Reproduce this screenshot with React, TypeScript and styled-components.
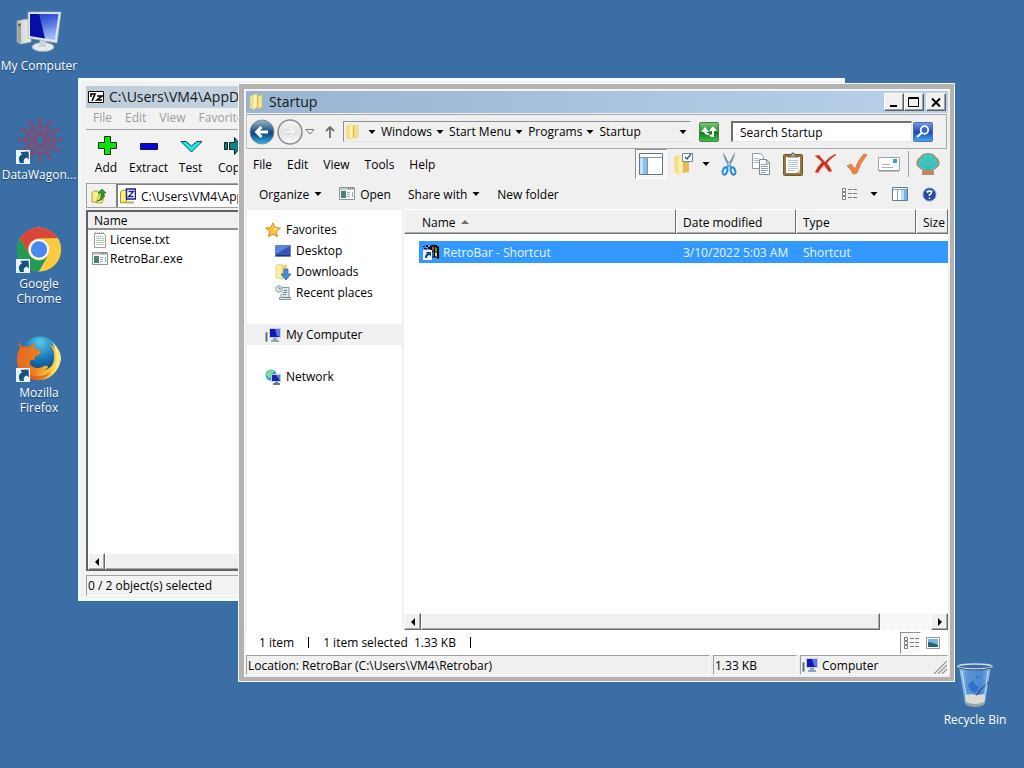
import React from "react";
import styled, { createGlobalStyle, css } from "styled-components";

const GlobalStyle = createGlobalStyle`
  *, *::before, *::after { box-sizing: border-box; }
  html, body, #root { height: 100%; }
  body { margin: 0; overflow: hidden; }
  body, button, input, table {
    font-family: "Open Sans", "Noto Sans", sans-serif;
    font-size: 12px;
    line-height: 15px;
    color: #000;
  }
  button { border: 0; padding: 0; background: none; }
  a { color: inherit; text-decoration: none; }
  svg { display: block; flex: none; }
`;

/* ---------- Desktop ---------- */

const Desktop = styled.main`
  position: relative;
  height: 100%;
  min-height: 100vh;
  background: #3a6ea5;
  overflow: hidden;
`;

const IconColumn = styled.div`
  display: flex;
  flex-direction: column;
  width: 78px;
  padding-top: 9px;
`;

const desktopIcon = css`
  display: flex;
  flex-direction: column;
  align-items: center;
  gap: 3px;
  color: #fff;
  text-align: center;
`;

const DesktopIcon = styled.button`
  ${desktopIcon}
  height: 109px;
`;

const BinIcon = styled.button`
  ${desktopIcon}
  position: absolute;
  right: 16px;
  bottom: 41px;
  width: 66px;
  white-space: nowrap;
`;

const IconLabel = styled.span`
  width: 78px;
  text-shadow: 0 1px 1px rgba(0, 20, 50, 0.5);
`;

/* ---------- Window frames ---------- */

const Window = styled.section<{ $active?: boolean }>`
  position: absolute;
  display: flex;
  flex-direction: column;
  background: #f0f0f0;
  ${(p) =>
    p.$active
      ? css`
          inset: 83px 69px 86px 238px;
          border: 6px solid #b4b1b1;
          border-right-width: 5px;
          border-bottom-width: 5px;
          outline: 1px solid #f4f8fa;
          outline-offset: -1px;
          padding: 2px;
          box-shadow: inset 1px 1px #f8f8f8;
        `
      : css`
          inset: 78px 179px 167px 78px;
          background: #f2f2f2;
          border: 3px solid #f8fbfd;
          border-left-color: #eef8fe;
          padding: 5px 5px 2px;
        `}
`;

const TitleBar = styled.header<{ $active?: boolean }>`
  display: flex;
  align-items: center;
  flex: none;
  height: 22px;
  padding: 0 2px;
  gap: 5px;
  background: ${(p) =>
    p.$active
      ? "linear-gradient(90deg, #99b4d1, #b9d1ea)"
      : "linear-gradient(90deg, #bfcddb, #d7e4f2)"};
`;

const Title = styled.h1`
  flex: 1;
  margin: 0;
  font-size: 14px;
  font-weight: 400;
  line-height: 20px;
  color: #101820;
  white-space: nowrap;
`;

const Caption = styled.button`
  display: grid;
  place-items: center;
  width: 20px;
  height: 18px;
  background: #f0f0f0;
  border: 1px solid;
  border-color: #fff #606060 #606060 #fff;
  box-shadow: inset -1px -1px #a0a0a0;
`;

const CaptionGroup = styled.div`
  display: flex;
  & > :last-child { margin-left: 2px; }
`;

/* ---------- Explorer: address row ---------- */

const AddressRow = styled.div`
  display: flex;
  align-items: center;
  flex: none;
  height: 35px;
  margin: 1px 1px 0 0;
  padding: 0 13px 0 2px;
  border: 1px solid #a8a8a8;
  border-left-color: #c8c8c8;
`;

const NavButton = styled.button`
  display: grid;
  place-items: center;
  flex: none;
`;

const GoButton = styled(NavButton)`
  margin-left: 8px;
`;

const NavGroup = styled.div`
  display: flex;
  align-items: center;
  gap: 2px;
  flex: none;
  width: 94px;
`;

const AddressBox = styled.div`
  display: flex;
  align-items: center;
  flex: 1;
  min-width: 0;
  height: 21px;
  border: 1px solid;
  border-color: #909090 #f4f4f4 #e4e4e4 #909090;
  padding-right: 3px;
`;

const Crumbs = styled.div`
  display: flex;
  align-items: center;
  flex: 1;
  padding-left: 7px;
`;

const Crumb = styled.button`
  padding: 0 3px 0 5px;
  white-space: nowrap;
`;

const CrumbArrow = styled.button`
  display: grid;
  place-items: center;
  width: 9px;
  height: 15px;
`;

const Spacer = styled.span`
  flex: 1;
`;

const SearchBox = styled.input`
  flex: none;
  width: 181px;
  height: 21px;
  margin: 0 1px 0 12px;
  padding: 0 7px;
  border: 1px solid;
  border-color: #707070 #e8e8e8 #e8e8e8 #707070;
  border-width: 2px 1px 1px 2px;
  border-radius: 0;
  background: #fff;
  outline: 0;
  &::placeholder { color: #000; opacity: 1; }
`;

/* ---------- Explorer: menu and commands ---------- */

const BarRow = styled.div`
  display: flex;
  align-items: center;
  justify-content: space-between;
  flex: none;
  height: 30px;
`;

const MenuGroup = styled.nav`
  display: flex;
  gap: 15px;
  padding-left: 7px;
`;

const ToolGroup = styled.div`
  display: flex;
  align-items: center;
  padding-right: 4px;
`;

const Tool = styled.button<{ $width?: number; $height?: number; $pressed?: boolean }>`
  display: grid;
  place-items: center;
  width: ${(p) => p.$width ?? 32}px;
  height: ${(p) => p.$height ?? 30}px;
  ${(p) =>
    p.$pressed &&
    css`
      background: #f8f8f8;
      border: 1px solid;
      border-color: #909090 #fff #fff #909090;
    `}
`;

const Divider = styled.span`
  width: 1px;
  height: 26px;
  margin: 0 3px;
  background: #a0a0a0;
`;

const CommandGroup = styled.div`
  display: flex;
  align-items: center;
  gap: 17px;
  padding-left: 13px;
`;

const Command = styled.button`
  display: flex;
  align-items: center;
  gap: 5px;
  white-space: nowrap;
`;

/* ---------- Explorer: body ---------- */

const Body = styled.div`
  display: flex;
  flex: 1;
  min-height: 0;
`;

const Sidebar = styled.nav`
  display: flex;
  flex-direction: column;
  gap: 21px;
  flex: none;
  width: 158px;
  padding-top: 9px;
  background: #fff;
  border-top: 1px solid #f0f0f0;
  border-left: 1px solid #f0f0f0;
  border-right: 2px solid #f0f0f0;
`;

const Places = styled.ul`
  margin: 0;
  padding: 0;
  list-style: none;
`;

const Place = styled.a<{ $nested?: boolean; $current?: boolean }>`
  display: flex;
  align-items: center;
  gap: 5px;
  height: 21px;
  padding-left: ${(p) => (p.$nested ? 28 : 18)}px;
  background: ${(p) => (p.$current ? "#f0f0f0" : "transparent")};
`;

const ListPane = styled.div`
  display: flex;
  flex-direction: column;
  flex: 1;
  min-width: 0;
  background: #fff;
`;

const ListScroll = styled.div`
  flex: 1;
  min-height: 0;
  overflow: hidden;
`;

const FileTable = styled.table`
  width: 100%;
  table-layout: fixed;
  border-collapse: separate;
  border-spacing: 0;
  text-align: left;
  white-space: nowrap;
  tbody::before {
    content: "";
    display: block;
    height: 7px;
  }
`;

const Column = styled.th<{ $width?: number; $first?: boolean }>`
  width: ${(p) => (p.$width ? `${p.$width}px` : "auto")};
  height: 25px;
  padding: 2px 0 0 ${(p) => (p.$first ? 17 : 6)}px;
  font-weight: 400;
  background: #f0f0f0;
  border: 1px solid;
  border-color: #fff #707070 #707070 #fcfcfc;
  box-shadow: inset 0 -1px #b0b0b0;
  overflow: hidden;
`;

const SortMark = styled.span`
  display: inline-block;
  margin: 0 0 3px 2px;
  border: 4px solid transparent;
  border-top: 0;
  border-bottom-color: #707070;
`;

const Cell = styled.td<{ $first?: boolean }>`
  height: 22px;
  padding: 0 0 0 ${(p) => (p.$first ? 4 : 7)}px;
  background: #3399ff;
  color: #e8f6ff;
  border-left: ${(p) => (p.$first ? "15px solid #fff" : "0")};
  overflow: hidden;
`;

const FileLink = styled.a`
  display: flex;
  align-items: center;
  gap: 4px;
`;

const ScrollBar = styled.div`
  display: flex;
  flex: none;
  height: 17px;
  background: repeating-conic-gradient(#f0f0f0 0 25%, #fff 0 50%) 0 0 / 2px 2px;
`;

const raised = css`
  background: #f0f0f0;
  border: 1px solid;
  border-color: #fff #696969 #696969 #fff;
  box-shadow: inset -1px -1px #a8a8a8;
`;

const ScrollButton = styled.button`
  ${raised}
  display: grid;
  place-items: center;
  flex: none;
  width: 17px;
`;

const Thumb = styled.div`
  ${raised}
  flex: 9;
`;

const Track = styled.div`
  flex: 1;
`;

const DetailsRow = styled.div`
  display: flex;
  align-items: center;
  flex: none;
  height: 25px;
  padding: 0 3px 0 13px;
  background: #fff;
  white-space: nowrap;
`;

const Tick = styled.span`
  width: 1px;
  height: 11px;
  margin: 0 14px;
  background: #000;
`;

const StatusRow = styled.footer`
  display: flex;
  flex: none;
  gap: 3px;
  height: 20px;
  white-space: nowrap;
`;

const StatusCell = styled.div<{ $width?: number }>`
  display: flex;
  align-items: center;
  gap: 4px;
  flex: ${(p) => (p.$width ? `0 0 ${p.$width}px` : "1")};
  padding-left: 1px;
  border: 1px solid;
  border-color: #a0a0a0 #fff #fff #a0a0a0;
  overflow: hidden;
`;

const Grip = styled.span`
  align-self: flex-end;
  margin-left: auto;
`;

/* ---------- 7-Zip window ---------- */

const ZipMenu = styled.nav`
  display: flex;
  gap: 13px;
  flex: none;
  height: 22px;
  padding: 2px 7px 4px;
  color: #9c9c9c;
  border-bottom: 1px solid #a0a0a0;
  button { color: inherit; }
`;

const ZipTools = styled.div`
  display: flex;
  flex: none;
  height: 53px;
  padding-top: 6px;
`;

const ZipTool = styled.button<{ $width: number }>`
  display: flex;
  flex-direction: column;
  align-items: center;
  gap: 3px;
  width: ${(p) => p.$width}px;
  height: 39px;
`;

const ZipPath = styled.div`
  display: flex;
  align-items: center;
  flex: none;
  height: 25px;
  border-top: 1px solid #a0a0a0;
  border-left: 1px solid #a0a0a0;
  border-bottom: 1px solid #a0a0a0;
`;

const ZipUp = styled.button`
  display: grid;
  place-items: center;
  flex: none;
  width: 24px;
`;

const ZipPathBox = styled.label`
  display: flex;
  align-items: center;
  gap: 5px;
  flex: 1;
  height: 23px;
  margin-left: 5px;
  padding-left: 2px;
  background: #fff;
  border-left: 2px solid #808080;
  border-top: 1px solid #808080;
  input {
    flex: 1;
    height: 17px;
    padding: 0;
    border: 0;
    outline: 0;
  }
`;

const ZipList = styled.div`
  display: flex;
  flex-direction: column;
  flex: 1;
  min-height: 0;
  margin: 2px 0 4px;
  background: #fff;
  border: 1px solid;
  border-color: #606060 #fff #606060 #606060;
  border-width: 2px 1px 1px 2px;
`;

const ZipTable = styled.table`
  width: 100%;
  border-spacing: 0;
  text-align: left;
  th {
    height: 18px;
    padding: 0 6px;
    font-weight: 400;
    background: #f0f0f0;
    border-bottom: 2px solid #909090;
  }
  td {
    height: 19px;
    padding: 0 4px;
  }
  a { gap: 2px; }
`;

const ZipFill = styled.div`
  flex: 1;
`;

const ZipStatus = styled.footer`
  flex: none;
  height: 21px;
  padding: 2px 1px;
  border: 1px solid;
  border-color: #a0a0a0 #fff #fff #a0a0a0;
`;

/* ---------- Icons ---------- */

const Triangle = ({ dir = "down" }: { dir?: "down" | "left" | "right" }) => (
  <svg width="8" height="8" viewBox="0 0 8 8" aria-hidden="true">
    <path
      d={dir === "down" ? "M.5 2h7L4 6z" : dir === "left" ? "M6 0v8L2 4z" : "M2 0v8l4-4z"}
    />
  </svg>
);

const ShortcutBadge = () => (
  <g>
    <path d="M0 32h14v14H0z" fill="#e6f2fc" />
    <path
      d="M4 45c-2-5-1-7 2-8.500L4.500 34l8-.5.5 8-2-2C8 40.500 7 42 8 45z"
      fill="#17527f"
    />
  </g>
);

const ComputerLarge = () => (
  <svg width="48" height="46" viewBox="0 0 48 46" aria-hidden="true">
    <defs>
      <linearGradient id="pcScreen" x1="0" y1="0" x2=".3" y2="1">
        <stop offset="0" stopColor="#2038c8" />
        <stop offset=".5" stopColor="#5070e0" />
        <stop offset="1" stopColor="#a0b8f8" />
      </linearGradient>
      <linearGradient id="pcCase" x1="0" y1="0" x2="1" y2="0">
        <stop offset="0" stopColor="#c8ccc8" />
        <stop offset="1" stopColor="#f2f2ec" />
      </linearGradient>
    </defs>
    <path d="M2 12l9-2 5 2v21L6 35l-4-2z" fill="url(#pcCase)" stroke="#a8aca8" strokeWidth=".7" />
    <path d="M2.500 13l3.500 1v20l-3.500-1z" fill="#9ca29c" />
    <circle cx="4.500" cy="16" r="1" fill="#333" />
    <ellipse cx="28" cy="38" rx="11" ry="4.500" fill="#e4e8e8" stroke="#9ca6ac" strokeWidth=".7" />
    <path d="M25 30l6 1v7h-7z" fill="#ccd4d8" />
    <path d="M13 3l33 0-4 31-29-5z" fill="#dfe8ee" stroke="#a4b4c0" strokeWidth=".7" />
    <path d="M15 5l28.500 0L40 31l-25-4z" fill="url(#pcScreen)" />
    <path d="M15 5h9l6 24.500-15-2.500z" fill="#0610a4" />
  </svg>
);

const WagonLarge = () => (
  <svg width="46" height="46" viewBox="0 0 46 46" aria-hidden="true">
    <g fill="none" stroke="#8d4869">
      <circle cx="24" cy="22" r="5" strokeWidth="2.200" />
      <circle cx="24" cy="22" r="9" strokeWidth="2" strokeDasharray="4 2" />
      <circle cx="24" cy="22" r="14" strokeWidth="1.500" strokeDasharray="5 2" />
      {Array.from({ length: 12 }, (_, i) => (
        <g key={i} transform={`rotate(${i * 30} 24 22)`} strokeWidth="1.300">
          <path d="M24 16V5M21 10l3-3 3 3" />
          <circle cx="24" cy="2.500" r="1.800" />
        </g>
      ))}
    </g>
    <ShortcutBadge />
  </svg>
);

const ChromeLarge = () => (
  <svg width="46" height="46" viewBox="0 0 46 46" aria-hidden="true">
    <circle cx="23" cy="22.500" r="22" fill="#f9ca3e" />
    <path d="M3.900 11.500A22 22 0 0 1 42 11.500H23a11 11 0 0 0-9.500 16.500z" fill="#d9453b" />
    <path d="M3.900 11.500A22 22 0 0 0 23 44.500L32.500 28a11 11 0 0 1-19 0z" fill="#1f9a57" />
    <path d="M42 11.500A22 22 0 0 1 23 44.500L32.500 28A11 11 0 0 0 23 11.500z" fill="#fbcb3f" />
    <circle cx="23" cy="22.500" r="10.200" fill="#f8fbff" />
    <circle cx="23" cy="22.500" r="8.200" fill="#4a8af0" />
    <ShortcutBadge />
  </svg>
);

const FirefoxLarge = () => (
  <svg width="46" height="46" viewBox="0 0 46 46" aria-hidden="true">
    <defs>
      <radialGradient id="ffGlobe" cx=".5" cy=".15" r=".85">
        <stop offset="0" stopColor="#56c8ec" />
        <stop offset=".5" stopColor="#1a78b8" />
        <stop offset="1" stopColor="#10336c" />
      </radialGradient>
      <linearGradient id="ffFox" x1="0" y1="0" x2="1" y2=".3">
        <stop offset="0" stopColor="#e2631c" />
        <stop offset=".6" stopColor="#f0811e" />
        <stop offset="1" stopColor="#fbd54a" />
      </linearGradient>
    </defs>
    <circle cx="24" cy="20" r="19.500" fill="url(#ffGlobe)" />
    <path
      d="M4 5c0 3 1 5 3 6 2-1 5-1 7 0 2-3 4-4 6-4-2 2-2 4-1 6 2 1 5 1 6 3 0 2-4 3-6 5 0 2 0 3-1 3-3-1-5 1-4 4 2 4 8 5 12 3 3-1 5-2 6 0-1 2-3 2-4 3 7-1 11-7 10-15 0-4-2-8-5-11 6 3 9 7 10 12 2 13-7 24-20 24C9 44 1 35 1 24c0-5 1-9 3-12-1-3-1-5 0-7z"
      fill="url(#ffFox)"
    />
    <path d="M35 5c6 5 10 11 10 18-1 6-3 11-8 14 3-6 4-11 3-17 0-6-2-11-5-15z" fill="#fce98a" />
    <path d="M4 26c2 9 9 14 18 14 5 0 10-2 13-5-3 6-8 9-14 9C11 44 4 36 4 26z" fill="#d9491a" opacity=".6" />
    <ShortcutBadge />
  </svg>
);

const BinLarge = () => (
  <svg width="42" height="48" viewBox="0 0 42 48" aria-hidden="true">
    <defs>
      <linearGradient id="binGlass" x1="0" y1="0" x2="1" y2="0">
        <stop offset="0" stopColor="#a6caee" />
        <stop offset=".25" stopColor="#5c94d6" />
        <stop offset=".7" stopColor="#4a88d0" />
        <stop offset="1" stopColor="#90bce6" />
      </linearGradient>
    </defs>
    <path d="M5 5h32l-6 38q-10 5-20 0z" fill="url(#binGlass)" />
    <path d="M11 34l6-1 6 1 7-1 1 2-1 8q-10 4-18 0z" fill="#dcdad4" />
    <path d="M12 41q9 4 18 0v3q-9 4-18 0z" fill="#98a4a8" />
    <path d="M14 24l5-5 2 5 4 2-4 6-5-3zM23 14l2 3-3 1z" fill="#2468cc" opacity=".8" />
    <path d="M24 31l11-10M22 34l4-3" stroke="#2c5c94" strokeWidth="1.300" />
    <path d="M8 10l5 31M34 10l-4 30" stroke="#c4e0f8" strokeWidth="1" fill="none" />
    <ellipse cx="21" cy="5.500" rx="17" ry="2.600" fill="#3c66a4" stroke="#cfdce6" strokeWidth="1.500" />
    <path d="M4 7q17 4 34 0" fill="none" stroke="#2f4f78" strokeWidth="1" />
  </svg>
);

const FolderIcon = () => (
  <svg width="16" height="16" viewBox="0 0 16 16" aria-hidden="true">
    <path d="M2 2l3-1v14l-3-1z" fill="#f4de88" />
    <path d="M5 1l4-1v13l-4 3z" fill="#fbf4b4" stroke="#e0c464" strokeWidth=".5" />
    <path d="M9 2l2 1v11l-2-1z" fill="#dcb84c" />
    <path d="M10 2l4-1v12l-4 2z" fill="#f6e48c" stroke="#d8b854" strokeWidth=".5" />
  </svg>
);

const ComputerIcon = () => (
  <svg width="16" height="16" viewBox="0 0 16 16" aria-hidden="true">
    <path d="M0 5h3v10H0z" fill="#b0b8b8" />
    <path d="M1 6h1v8H1z" fill="#4c6c58" />
    <path d="M4 1h12v10H4z" fill="#c4cce0" />
    <path d="M5 2h10v8H5z" fill="#1018b0" />
    <path d="M10 2h5v8l-3-1z" fill="#5878e4" />
    <path d="M8 11h4v2H8zM6 13h8v2H6z" fill="#8ea4b8" />
  </svg>
);

const NetworkIcon = () => (
  <svg width="16" height="16" viewBox="0 0 16 16" aria-hidden="true">
    <circle cx="6" cy="6" r="5.500" fill="#28a4c8" />
    <path d="M2 3c3-3 6-2 7 0L6 5l1 3-3 1-3-3z" fill="#7fdc98" />
    <path d="M6 5h10v8H6z" fill="#bcc8dc" />
    <path d="M7 6h8v6H7z" fill="#1428b0" />
    <path d="M11 6h4v6z" fill="#5c80e4" />
    <path d="M10 13h3v1h2v2H8v-2h2z" fill="#5f7894" />
  </svg>
);

const StarIcon = () => (
  <svg width="16" height="16" viewBox="0 0 16 16" aria-hidden="true">
    <path d="M8 .8l2.200 4.700 5.200.6-3.900 3.500 1 5.200L8 12.200l-4.500 2.600 1-5.200L.6 6.100l5.200-.6z" fill="#fbc23c" stroke="#d98a24" />
    <path d="M8 3l1.200 3.500H13L9 9z" fill="#fff0a0" />
  </svg>
);

const DesktopIconSmall = () => (
  <svg width="16" height="16" viewBox="0 0 16 16" aria-hidden="true">
    <path d="M.5 2.500h15v11H.5z" fill="#3454b8" stroke="#7084b0" />
    <path d="M1 3h14L1 11z" fill="#5a84dc" />
    <path d="M1 12h14v1H1z" fill="#1c3068" />
  </svg>
);

const DownloadsIcon = () => (
  <svg width="16" height="16" viewBox="0 0 16 16" aria-hidden="true">
    <path d="M1 1l6-1v15l-6-1z" fill="#fbf0a8" stroke="#d8bc60" strokeWidth=".6" />
    <path d="M7 1h5v13l-5 1z" fill="#ecd070" />
    <path d="M9 5h4v5h3l-5 6-5-6h3z" fill="#3b92d8" stroke="#2265a8" strokeWidth=".7" />
  </svg>
);

const RecentIcon = () => (
  <svg width="16" height="16" viewBox="0 0 16 16" aria-hidden="true">
    <path d="M5 2.500h9v10h1.500v2h-11v-2H6V9" fill="#dfe6ea" stroke="#8494a0" />
    <circle cx="4" cy="4" r="3.200" fill="#e8f0f4" stroke="#8b9ca8" />
    <path d="M4 2v2h2M9 5.500h3M8 7.500h4M8 9.500h3M7 12.500h7" fill="none" stroke="#74848e" />
  </svg>
);

const AppIcon = () => (
  <svg width="16" height="14" viewBox="0 0 16 14" aria-hidden="true">
    <path d="M.5.500h15v12H.5z" fill="#f8fafa" stroke="#8a9898" />
    <path d="M1 1h14v2H1z" fill="#c2cccc" />
    <path d="M9 1.500h1M11 1.500h1M13 1.500h1" stroke="#567" />
    <path d="M2 4h5v7H2z" fill="#4c8078" />
    <path d="M8 5.500h3M8 7.500h3M8 9.500h3M13.500 5v5" stroke="#9cacac" />
  </svg>
);

const TextFileIcon = () => (
  <svg width="16" height="16" viewBox="0 0 16 16" aria-hidden="true">
    <path d="M2.500 1.500h9l2 2v12h-11z" fill="#fafcfa" stroke="#98a0a0" />
    <path d="M4 4.500h7M4 6.500h8M4 8.500h8M4 10.500h8M4 12.500h8" stroke="#b4c4c0" />
    <path d="M3 1h9" stroke="#708080" strokeDasharray="1 1" />
  </svg>
);

const FlagShortcutIcon = () => (
  <svg width="16" height="16" viewBox="0 0 16 16" aria-hidden="true">
    <path d="M0 2h2v1H0zM3 1h2v2H3zM1 4h3v1H1zM5 3h2v2H5zM7 2q5-3 9 1v12q-4-3-8-1z" fill="#000" />
    <path d="M9 3l2-1v4l-2 1z" fill="#e43a2c" />
    <path d="M12 3l2 1v4l-2-1z" fill="#38b048" />
    <path d="M9 8l2-1v5l-2 1z" fill="#2c5ce0" />
    <path d="M12 8l2 1v4l-2-1z" fill="#f4d83c" />
    <path d="M0 6h9v10H0z" fill="#eef4fa" />
    <path d="M2 14c0-3 1-4 2-4L3 8h5v5l-1-2c-2 0-3 1-3 3z" fill="#1c4480" />
  </svg>
);

const BackIcon = () => (
  <svg width="26" height="26" viewBox="0 0 26 26" aria-hidden="true">
    <defs>
      <linearGradient id="backBall" x1="0" y1="0" x2="0" y2="1">
        <stop offset="0" stopColor="#9fb6c8" />
        <stop offset=".45" stopColor="#20588c" />
        <stop offset=".55" stopColor="#0c4480" />
        <stop offset="1" stopColor="#35b4ec" />
      </linearGradient>
    </defs>
    <circle cx="13" cy="13" r="12" fill="url(#backBall)" stroke="#7c8c98" />
    <path d="M19 13H8M12.500 8L7.500 13l5 5" fill="none" stroke="#fff" strokeWidth="2.800" />
  </svg>
);

const ForwardIcon = () => (
  <svg width="26" height="26" viewBox="0 0 26 26" aria-hidden="true">
    <defs>
      <linearGradient id="fwdBall" x1="0" y1="0" x2="0" y2="1">
        <stop offset="0" stopColor="#f8f8f8" />
        <stop offset=".5" stopColor="#e2e2e2" />
        <stop offset="1" stopColor="#fafafa" />
      </linearGradient>
    </defs>
    <circle cx="13" cy="13" r="12" fill="url(#fwdBall)" stroke="#8c8c8c" strokeWidth="1.500" />
    <path d="M7 13h10M13.500 9l4.500 4-4.500 4" fill="none" stroke="#f4f4f4" strokeWidth="2" />
    <path d="M7 15h8M14 18l5-5" stroke="#ccc" strokeWidth=".7" />
  </svg>
);

const RefreshIcon = () => (
  <svg width="20" height="20" viewBox="0 0 20 20" aria-hidden="true">
    <defs>
      <linearGradient id="goGreen" x1="0" y1="0" x2="0" y2="1">
        <stop offset="0" stopColor="#7cc47c" />
        <stop offset=".45" stopColor="#2e9a34" />
        <stop offset=".55" stopColor="#0f7e18" />
        <stop offset="1" stopColor="#44c444" />
      </linearGradient>
    </defs>
    <rect x=".5" y=".5" width="19" height="19" rx="1" fill="url(#goGreen)" stroke="#4c7c50" />
    <path d="M2 10l4-5 4 5zM10 9h8l-4-5z" fill="#fff" />
    <path d="M6 9q0 3 4 3M14 8v6q-2 0-3-1" stroke="#fff" strokeWidth="2" fill="none" />
  </svg>
);

const SearchIcon = () => (
  <svg width="20" height="20" viewBox="0 0 20 20" aria-hidden="true">
    <defs>
      <linearGradient id="goBlue" x1="0" y1="0" x2="0" y2="1">
        <stop offset="0" stopColor="#7c9ce0" />
        <stop offset=".5" stopColor="#1c48b8" />
        <stop offset="1" stopColor="#3cb0f4" />
      </linearGradient>
    </defs>
    <rect x=".5" y=".5" width="19" height="19" rx="1" fill="url(#goBlue)" stroke="#5870a0" />
    <circle cx="11.500" cy="8" r="3.800" fill="#3868c8" stroke="#fff" strokeWidth="1.800" />
    <path d="M8.500 11L4 15" stroke="#fff" strokeWidth="2.200" />
  </svg>
);

const PaneIcon = () => (
  <svg width="24" height="22" viewBox="0 0 24 22" aria-hidden="true">
    <path d="M.5.500h23v21H.5z" fill="#fff" stroke="#5c7488" />
    <path d="M1 4.500h22" stroke="#8498a8" />
    <path d="M1 5h7v16H1z" fill="#8cc0f0" />
    <path d="M1 5h3v16H1z" fill="#c4e0fa" />
    <path d="M8.500 5v16" stroke="#7890a4" />
  </svg>
);

const PreviewIcon = () => (
  <svg width="16" height="14" viewBox="0 0 16 14" aria-hidden="true">
    <path d="M.5.500h15v13H.5z" fill="#fff" stroke="#5c7c94" />
    <path d="M1 2.500h14M5.500 3v10" stroke="#8ca4b4" />
    <path d="M9 3h6v10H9z" fill="#74b0ec" />
    <path d="M9 3h3v10H9z" fill="#b8dcfa" />
  </svg>
);

const FolderOptionsIcon = () => (
  <svg width="22" height="24" viewBox="0 0 22 24" aria-hidden="true">
    <path d="M2 5l4-2v19l-4-2z" fill="#f4e08c" />
    <path d="M6 4l5-1v16l-5 4z" fill="#fbf2b0" stroke="#e0c870" strokeWidth=".5" />
    <path d="M11 7l6-2v15l-6 1z" fill="#e4bc58" />
    <path d="M10.500 1.500h10v8h-10z" fill="#fff" stroke="#708890" />
    <path d="M13 5l2 2 4-5" fill="none" stroke="#34607c" strokeWidth="1.500" />
  </svg>
);

const CutIcon = () => (
  <svg width="16" height="24" viewBox="0 0 16 24" aria-hidden="true">
    <path d="M2 0q0 4 2 8l4 8 2-2zM14 0q0 4-2 8l-4 8-2-2z" fill="#7c98ac" />
    <path d="M8 13l-3 3M8 13l3 3" stroke="#3cacE0" strokeWidth="2" />
    <ellipse cx="4" cy="19" rx="2.200" ry="3.700" fill="none" stroke="#2c8cd8" strokeWidth="2" transform="rotate(18 4 19)" />
    <ellipse cx="12" cy="19" rx="2.200" ry="3.700" fill="none" stroke="#2c8cd8" strokeWidth="2" transform="rotate(-18 12 19)" />
  </svg>
);

const CopyIcon = () => (
  <svg width="20" height="24" viewBox="0 0 20 24" aria-hidden="true">
    <path d="M1.500 1.500h8l3 3v12h-11z" fill="#fff" stroke="#8c9ca4" />
    <path d="M3 6.500h5M3 8.500h5M3 10.500h5" stroke="#b0bcc4" />
    <path d="M8.500 7.500h7l3 3v12h-10z" fill="#fff" stroke="#7c8c98" />
    <path d="M15.500 8v3h3" fill="none" stroke="#7c8c98" />
    <path d="M10 12.500h7M10 14.500h7M10 16.500h7M10 18.500h7M10 20.500h5" stroke="#94a8b8" />
  </svg>
);

const PasteIcon = () => (
  <svg width="20" height="24" viewBox="0 0 20 24" aria-hidden="true">
    <rect x=".5" y="2.500" width="19" height="21" rx="1" fill="#987440" stroke="#705828" />
    <path d="M3 5h14v16H3z" fill="#fcfcfc" />
    <path d="M5 5l3-2 1-2h2l1 2 3 2z" fill="#a8a8a0" stroke="#505050" strokeWidth=".8" />
    <path d="M5 8.500h10M5 10.500h10M5 12.500h10M5 14.500h10M5 16.500h10M5 18.500h7" stroke="#b8c8d4" />
    <path d="M13 21l4-4v4z" fill="#d4c49c" />
  </svg>
);

const DeleteIcon = () => (
  <svg width="22" height="22" viewBox="0 0 22 22" aria-hidden="true">
    <path d="M1 3l4-1q3 4 6 7 4-5 10-8l1 1q-5 3-9 8 3 4 5 8l-3 1q-3-4-5-7-4 4-6 8l-3-1q3-6 7-10-3-3-7-6z" fill="#c8321e" stroke="#e08070" strokeWidth=".6" />
  </svg>
);

const CheckIcon = () => (
  <svg width="22" height="22" viewBox="0 0 22 22" aria-hidden="true">
    <path d="M1 13l4-2 4 5q3-9 9-15l3 1Q14 10 11 20l-4 1q-2-5-6-8z" fill="#ec8444" stroke="#cc6a34" strokeWidth=".7" />
  </svg>
);

const MailIcon = () => (
  <svg width="22" height="16" viewBox="0 0 22 16" aria-hidden="true">
    <path d="M.5 1.500h21v13H.5z" fill="#fbfcfc" stroke="#98a4a8" />
    <path d="M15 3h4v4h-4z" fill="#48a0b4" />
    <path d="M4 8.500h8M4 11.500h11" stroke="#a8b0b4" />
    <path d="M1 15h20" stroke="#808c90" />
  </svg>
);

const ShellIcon = () => (
  <svg width="24" height="22" viewBox="0 0 24 22" aria-hidden="true">
    <path d="M7 18L1 13Q-1 7 4 4 6 0 12 0t8 4q5 3 3 9l-6 5 1 4H6z" fill="#a49070" />
    <path d="M8 18L3 13Q1 7 5 5q2-4 7-4t7 4q4 2 2 8l-5 5z" fill="#44c8c0" />
    <path d="M12 17V2M11 17L7 4M13 17l4-13M10 17L3 8M14 17l7-9" stroke="#2ca4a4" strokeWidth=".7" fill="none" />
    <path d="M6 18q6-3 12 0v3H6z" fill="#c88458" />
  </svg>
);

const ViewsIcon = () => (
  <svg width="16" height="14" viewBox="0 0 16 14" aria-hidden="true">
    <g fill="#fff" stroke="#7c7c7c">
      <path d="M1.500 1.500h3v3h-3zM1.500 5.500h3v3h-3zM1.500 9.500h3v3h-3z" />
      <path d="M7 2.500h4M12 2.500h4M7 6.500h4M12 6.500h4M7 10.500h4M12 10.500h4" />
    </g>
  </svg>
);

const HelpIcon = () => (
  <svg width="15" height="15" viewBox="0 0 15 15" aria-hidden="true">
    <circle cx="7.500" cy="7.500" r="6.500" fill="#2448a8" stroke="#8094c0" />
    <path d="M3 5a5 4 0 0 1 9 0z" fill="#7898dc" />
    <path d="M5.500 6q0-2 2-2t2 1.700q0 1-2 2v1.300M7.500 10.500v1.500" fill="none" stroke="#fff" strokeWidth="1.500" />
  </svg>
);

const PictureIcon = () => (
  <svg width="14" height="12" viewBox="0 0 14 12" aria-hidden="true">
    <path d="M.5.500h13v11H.5z" fill="#fff" stroke="#8c9ca8" />
    <path d="M2 2h10v8H2z" fill="#78b8e0" />
    <path d="M2 5q4 0 10 3v2H2z" fill="#24647c" />
  </svg>
);

const SevenZipIcon = () => (
  <svg width="16" height="12" viewBox="0 0 16 12" aria-hidden="true">
    <path d="M.5.500h15v11H.5z" fill="#fff" stroke="#000" />
    <path d="M2 3h5L4 10M3 3v3M9 5h5l-5 4h5" fill="none" stroke="#000" strokeWidth="1.600" />
  </svg>
);

const UpFolderIcon = () => (
  <svg width="16" height="16" viewBox="0 0 16 16" aria-hidden="true">
    <path d="M1 5l2-2h4l1 2v9H1z" fill="#f8f088" stroke="#b0a040" />
    <path d="M5 15l3-8h6l-3 8z" fill="#f4e878" stroke="#a09038" strokeWidth=".7" />
    <path d="M6 13q5-1 4-8H7l4-4 4 4h-2q1 7-7 8z" fill="#28a028" stroke="#145c14" strokeWidth=".6" />
  </svg>
);

const ZipFolderIcon = () => (
  <svg width="16" height="16" viewBox="0 0 16 16" aria-hidden="true">
    <path d="M.5 4l2-2h4v12l-6 1z" fill="#f8f070" stroke="#a09830" />
    <path d="M3 14.500h11" stroke="#c0b440" strokeWidth="2" />
    <path d="M6.500 1h9v10h-9z" fill="#fff" stroke="#1c1c94" strokeWidth="1.500" />
    <path d="M8.500 3.500h5l-5 5h5" fill="none" stroke="#1c1c94" strokeWidth="1.300" />
  </svg>
);

const ZipGlyph = ({ kind }: { kind: "add" | "extract" | "test" | "copy" }) => (
  <svg width="22" height="21" viewBox="0 0 22 21" aria-hidden="true">
    {kind === "add" && (
      <path d="M9.500.500h6v6h6v6h-6v6h-6v-6h-6v-6h6z" fill="#10e010" stroke="#083808" />
    )}
    {kind === "extract" && <path d="M2.500 7.500h17v6h-17z" fill="#0808dc" stroke="#181848" />}
    {kind === "test" && (
      <path d="M1 5.500h5l5.500 4.500L17 5.500h5L11.500 16z" fill="#20e8f0" stroke="#104850" />
    )}
    {kind === "copy" && (
      <path d="M3.500 6.500h3v7h-3zM8.500 6.500h5v-5l7 8.500-7 8.500v-5h-5z" fill="#108080" stroke="#082828" />
    )}
  </svg>
);

/* ---------- Windows ---------- */

const zipTools = [
  { kind: "add", label: "Add", width: 40 },
  { kind: "extract", label: "Extract", width: 45 },
  { kind: "test", label: "Test", width: 39 },
  { kind: "copy", label: "Copy", width: 44 },
] as const;

const ZipWindow = () => (
  <Window aria-label="7-Zip">
    <TitleBar>
      <SevenZipIcon />
      <Title>C:\Users\VM4\AppData\</Title>
    </TitleBar>
    <ZipMenu>
      {["File", "Edit", "View", "Favorites"].map((m) => (
        <button key={m}>{m}</button>
      ))}
    </ZipMenu>
    <ZipTools>
      {zipTools.map((t) => (
        <ZipTool key={t.kind} $width={t.width}>
          <ZipGlyph kind={t.kind} />
          {t.label}
        </ZipTool>
      ))}
    </ZipTools>
    <ZipPath>
      <ZipUp aria-label="Up one level">
        <UpFolderIcon />
      </ZipUp>
      <ZipPathBox>
        <ZipFolderIcon />
        <input aria-label="Path" defaultValue="C:\Users\VM4\AppData\" />
      </ZipPathBox>
    </ZipPath>
    <ZipList>
      <ZipTable>
        <thead>
          <tr>
            <th>Name</th>
          </tr>
        </thead>
        <tbody>
          <tr>
            <td>
              <FileLink href="#license">
                <TextFileIcon />
                License.txt
              </FileLink>
            </td>
          </tr>
          <tr>
            <td>
              <FileLink href="#retrobar">
                <AppIcon />
                RetroBar.exe
              </FileLink>
            </td>
          </tr>
        </tbody>
      </ZipTable>
      <ZipFill />
      <ScrollBar>
        <ScrollButton aria-label="Scroll left">
          <Triangle dir="left" />
        </ScrollButton>
        <Thumb />
        <Track />
      </ScrollBar>
    </ZipList>
    <ZipStatus>0 / 2 object(s) selected</ZipStatus>
  </Window>
);

const favorites = [
  { label: "Desktop", icon: <DesktopIconSmall /> },
  { label: "Downloads", icon: <DownloadsIcon /> },
  { label: "Recent places", icon: <RecentIcon /> },
];

const ExplorerWindow = () => (
  <Window $active aria-label="Startup">
    <TitleBar $active>
      <FolderIcon />
      <Title>Startup</Title>
      <CaptionGroup>
        <Caption aria-label="Minimize">
          <svg width="12" height="11" viewBox="0 0 12 11">
            <path d="M2 8h7v2H2z" />
          </svg>
        </Caption>
        <Caption aria-label="Maximize">
          <svg width="12" height="11" viewBox="0 0 12 11">
            <path d="M.5.500h10v9H.5zM0 1.500h11" fill="none" stroke="#000" />
          </svg>
        </Caption>
        <Caption aria-label="Close">
          <svg width="12" height="11" viewBox="0 0 12 11">
            <path d="M2 1.500l8 8M10 1.500l-8 8" stroke="#000" strokeWidth="2" />
          </svg>
        </Caption>
      </CaptionGroup>
    </TitleBar>

    <AddressRow>
      <NavGroup>
        <NavButton aria-label="Back">
          <BackIcon />
        </NavButton>
        <NavButton aria-label="Forward">
          <ForwardIcon />
        </NavButton>
        <NavButton aria-label="Recent locations">
          <svg width="10" height="8" viewBox="0 0 10 8">
            <path d="M1 1.500h8L5 6z" fill="#f8f8f8" stroke="#787878" />
          </svg>
        </NavButton>
        <Spacer />
        <NavButton aria-label="Up">
          <svg width="10" height="13" viewBox="0 0 10 13">
            <path d="M5 13V2M1 6l4-4 4 4" fill="none" stroke="#707070" strokeWidth="1.800" />
          </svg>
        </NavButton>
        <Spacer />
      </NavGroup>
      <AddressBox>
        <FolderIcon />
        <Crumbs>
          {["Windows", "Start Menu", "Programs", "Startup"].map((c) => (
            <React.Fragment key={c}>
              <CrumbArrow aria-label={`Browse to ${c}`}>
                <Triangle />
              </CrumbArrow>
              <Crumb>{c}</Crumb>
            </React.Fragment>
          ))}
        </Crumbs>
        <CrumbArrow aria-label="Previous locations">
          <Triangle />
        </CrumbArrow>
      </AddressBox>
      <GoButton aria-label="Refresh">
        <RefreshIcon />
      </GoButton>
      <SearchBox type="text" placeholder="Search Startup" aria-label="Search Startup" />
      <NavButton aria-label="Search">
        <SearchIcon />
      </NavButton>
    </AddressRow>

    <BarRow>
      <MenuGroup>
        {["File", "Edit", "View", "Tools", "Help"].map((m) => (
          <button key={m}>{m}</button>
        ))}
      </MenuGroup>
      <ToolGroup>
        <Tool $pressed aria-label="Navigation pane"><PaneIcon /></Tool>
        <Tool aria-label="Folder options"><FolderOptionsIcon /></Tool>
        <Tool $width={14} aria-label="More options"><Triangle /></Tool>
        <Tool aria-label="Cut"><CutIcon /></Tool>
        <Tool aria-label="Copy"><CopyIcon /></Tool>
        <Tool aria-label="Paste"><PasteIcon /></Tool>
        <Tool aria-label="Delete"><DeleteIcon /></Tool>
        <Tool aria-label="Properties"><CheckIcon /></Tool>
        <Tool aria-label="E-mail"><MailIcon /></Tool>
        <Divider />
        <Tool aria-label="Classic settings"><ShellIcon /></Tool>
      </ToolGroup>
    </BarRow>

    <BarRow>
      <CommandGroup>
        <Command>Organize <Triangle /></Command>
        <Command><AppIcon /> Open</Command>
        <Command>Share with <Triangle /></Command>
        <Command>New folder</Command>
      </CommandGroup>
      <ToolGroup>
        <Tool $width={26} aria-label="Change view"><ViewsIcon /></Tool>
        <Tool $width={24} aria-label="View options"><Triangle /></Tool>
        <Tool $width={28} aria-label="Preview pane"><PreviewIcon /></Tool>
        <Tool $width={30} aria-label="Help"><HelpIcon /></Tool>
      </ToolGroup>
    </BarRow>

    <Body>
      <Sidebar aria-label="Places">
        <Places>
          <li><Place href="#favorites"><StarIcon />Favorites</Place></li>
          {favorites.map((f) => (
            <li key={f.label}>
              <Place href="#favorites" $nested>{f.icon}{f.label}</Place>
            </li>
          ))}
        </Places>
        <Places>
          <li><Place href="#computer" $current><ComputerIcon />My Computer</Place></li>
        </Places>
        <Places>
          <li><Place href="#network"><NetworkIcon />Network</Place></li>
        </Places>
      </Sidebar>
      <ListPane>
        <ListScroll>
          <FileTable>
            <thead>
              <tr>
                <Column $width={272} $first>Name <SortMark /></Column>
                <Column $width={120}>Date modified</Column>
                <Column $width={120}>Type</Column>
                <Column>Size</Column>
              </tr>
            </thead>
            <tbody>
              <tr>
                <Cell $first>
                  <FileLink href="#shortcut">
                    <FlagShortcutIcon />
                    RetroBar - Shortcut
                  </FileLink>
                </Cell>
                <Cell>3/10/2022 5:03 AM</Cell>
                <Cell>Shortcut</Cell>
                <Cell />
              </tr>
            </tbody>
          </FileTable>
        </ListScroll>
        <ScrollBar>
          <ScrollButton aria-label="Scroll left"><Triangle dir="left" /></ScrollButton>
          <Thumb />
          <Track />
          <ScrollButton aria-label="Scroll right"><Triangle dir="right" /></ScrollButton>
        </ScrollBar>
      </ListPane>
    </Body>

    <DetailsRow>
      1 item
      <Tick />
      1 item selected&nbsp; 1.33 KB
      <Tick />
      <Spacer />
      <Tool $width={21} $height={22} $pressed aria-label="Details view"><ViewsIcon /></Tool>
      <Tool $width={24} $height={22} aria-label="Large icons"><PictureIcon /></Tool>
    </DetailsRow>
    <StatusRow>
      <StatusCell>Location: RetroBar (C:\Users\VM4\Retrobar)</StatusCell>
      <StatusCell $width={84}>1.33 KB</StatusCell>
      <StatusCell $width={148}>
        <ComputerIcon />
        Computer
        <Grip>
          <svg width="14" height="14" viewBox="0 0 14 14" aria-hidden="true">
            <path d="M1 14L14 1M5 14l9-9M9 14l5-5" stroke="#989090" strokeWidth="1.200" />
          </svg>
        </Grip>
      </StatusCell>
    </StatusRow>
  </Window>
);

const shortcuts = [
  { label: "My Computer", icon: <ComputerLarge /> },
  { label: "DataWagon...", icon: <WagonLarge /> },
  { label: "Google Chrome", icon: <ChromeLarge /> },
  { label: "Mozilla Firefox", icon: <FirefoxLarge /> },
];

export default function App() {
  return (
    <Desktop>
      <GlobalStyle />
      <IconColumn>
        {shortcuts.map((s) => (
          <DesktopIcon key={s.label}>
            {s.icon}
            <IconLabel>{s.label}</IconLabel>
          </DesktopIcon>
        ))}
      </IconColumn>
      <ZipWindow />
      <ExplorerWindow />
      <BinIcon>
        <BinLarge />
        Recycle Bin
      </BinIcon>
    </Desktop>
  );
}
